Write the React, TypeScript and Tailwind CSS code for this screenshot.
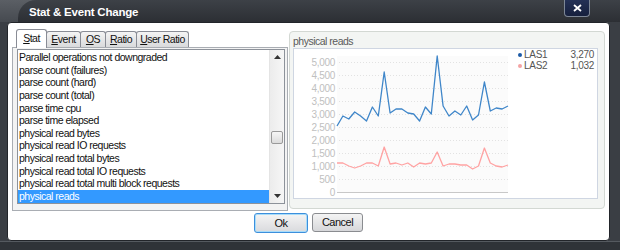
import React from 'react'

const FONT = { fontFamily: '"Liberation Sans", Arial, sans-serif' }

const items = [
  'Parallel operations not downgraded',
  'parse count (failures)',
  'parse count (hard)',
  'parse count (total)',
  'parse time cpu',
  'parse time elapsed',
  'physical read bytes',
  'physical read IO requests',
  'physical read total bytes',
  'physical read total IO requests',
  'physical read total multi block requests',
  'physical reads',
]

// page coords of the series, shifted into the chart box below
const las1 = [127, 117, 120, 113, 117, 122, 108, 117, 73, 114, 110, 110, 114, 115, 122, 108, 115, 57, 107, 117, 112, 116, 107, 121, 116, 83, 112, 109, 110, 107]
const las2 = [164, 164, 167, 169, 167, 164, 164, 167, 148, 165, 164, 166, 164, 168, 164, 165, 164, 153, 167, 165, 165, 166, 166, 170, 167, 149, 164, 167, 168, 166]

const OX = 294
const OY = 50
const X0 = 337
const X1 = 508

function pts(ys: number[]) {
  const step = (X1 - X0) / (ys.length - 1)
  return ys.map((y, i) => `${(X0 + i * step - OX).toFixed(1)},${y - OY}`).join(' ')
}

const ticks = ['5,000', '4,500', '4,000', '3,500', '3,000', '2,500', '2,000', '1,500', '1,000', '500', '0']

function Chart() {
  return (
    <svg width="303" height="149" className="block">
      <rect x={X0 - OX} y={57 - OY} width={X1 - X0} height={136} fill="#fbfbfb" />
      {ticks.map((t, i) => {
        const y = 63 + i * 13 - OY
        return (
          <g key={t}>
            {t !== '0' && (
              <line x1={X0 + 2 - OX} x2={X1 - OX} y1={y + 0.5} y2={y + 0.5} stroke="#e2e2e2" strokeDasharray="1 2" />
            )}
            <text x={335 - OX} y={y + 3.5} textAnchor="end" fontSize="10" letterSpacing="-0.3" fill="#c0c0c0" style={FONT}>
              {t}
            </text>
          </g>
        )
      })}
      <line x1={X0 - OX} x2={X1 - OX} y1={193.5 - OY} y2={193.5 - OY} stroke="#c8c8c8" />
      <polyline points={pts(las1)} fill="none" stroke="#3f86c9" strokeWidth="1.3" strokeLinejoin="round" />
      <polyline points={pts(las2)} fill="none" stroke="#ffa3a3" strokeWidth="1.3" strokeLinejoin="round" />
    </svg>
  )
}

function Tab({ label, w, active }: { label: string; w: string; active?: boolean }) {
  return (
    <div
      className={
        active
          ? `${w} h-[19px] relative z-10 -mb-px bg-white border border-b-0 border-[#898c95] rounded-t-[3px] flex items-center justify-center whitespace-nowrap`
          : `${w} h-[16px] bg-gradient-to-b from-[#f4f4f4] to-[#d9dadc] border border-b-0 border-[#898c95] rounded-t-[3px] flex items-center justify-center -ml-px whitespace-nowrap`
      }
    >
      <span className="text-[10.5px] text-[#111]">
        <span className="underline">{label[0]}</span>
        {label.slice(1)}
      </span>
    </div>
  )
}

export default function App() {
  return (
    <div className="w-[620px] h-[250px] bg-[#3a3e44] flex flex-col overflow-hidden tracking-[-0.5px]" style={FONT}>
      <div className="h-[22px] flex bg-gradient-to-b from-[#5b5f65] to-[#464a50]">
        <div className="ml-[18px] flex-1 flex rounded-tl-[18px] bg-gradient-to-b from-[#3d4147] to-[#2c2f34]">
          <div className="pl-[11px] pt-[4px] text-[11.5px] font-bold text-white tracking-[-0.2px]">Stat &amp; Event Change</div>
          <div className="ml-auto mr-[30px] w-[26px] h-[17px] rounded-b-[4px] border border-t-0 border-[#7d8796] bg-gradient-to-b from-[#243156] to-[#16203d] flex items-center justify-center">
            <svg width="9" height="8" viewBox="0 0 9 8">
              <path d="M1 1 L8 7 M8 1 L1 7" stroke="#fff" strokeWidth="1.8" />
            </svg>
          </div>
        </div>
      </div>

      <div className="ml-[7px] mr-[10px] h-[219px] bg-white border border-[#22252a] rounded-[4px] flex flex-col pt-[6px] px-[4px]">
        <div className="flex gap-[1px] h-[180px]">
          <div className="w-[276px] flex flex-col">
            <div className="flex items-end h-[19px] pl-[4px]">
              <Tab label="Stat" w="w-[31px]" active />
              <Tab label="Event" w="w-[35px]" />
              <Tab label="OS" w="w-[26px]" />
              <Tab label="Ratio" w="w-[32px]" />
              <Tab label="User Ratio" w="w-[53px]" />
            </div>
            <div className="flex-1 border border-[#a9adb3] bg-[#f3f3f3] pl-[4px] pr-[2px] pt-[1px] pb-[6px]">
              <div className="h-full border border-[#8d929a] bg-white flex">
                <div className="flex-1 pt-[1px]">
                  {items.map((t, i) => (
                    <div
                      key={t}
                      className={
                        i === items.length - 1
                          ? 'h-[12.64px] leading-[12.64px] text-[10.5px] pl-[1px] bg-[#3399ff] text-white whitespace-nowrap'
                          : 'h-[12.64px] leading-[12.64px] text-[10.5px] pl-[1px] text-[#111] whitespace-nowrap'
                      }
                    >
                      {t}
                    </div>
                  ))}
                </div>
                <div className="w-[15px] bg-gradient-to-r from-[#ececec] to-[#f6f6f6] border-l border-[#e4e4e4] flex flex-col items-center">
                  <div className="h-[14px] flex items-center justify-center">
                    <svg width="7" height="4"><path d="M0 4 L3.5 0 L7 4 Z" fill="#333" /></svg>
                  </div>
                  <div className="mt-[67px] w-[12px] h-[13px] rounded-[2px] border border-[#9a9a9a] bg-gradient-to-b from-[#f6f6f6] to-[#dcdcdc]" />
                  <div className="mt-auto h-[14px] flex items-center justify-center">
                    <svg width="7" height="4"><path d="M0 0 L7 0 L3.5 4 Z" fill="#333" /></svg>
                  </div>
                </div>
              </div>
            </div>
          </div>

          <div className="flex-1 mt-[2px] border border-[#d3d8d3] rounded-[4px] bg-[#f3f5f3] px-[3px] flex flex-col">
            <div className="h-[16px] pt-[3px] text-[10.5px] text-[#5a5a5a] leading-[12px]">physical reads</div>
            <div className="w-[305px] h-[151px] border border-[#cfd6e2] bg-white relative">
              <Chart />
              <div className="absolute right-[3px] top-[0px] w-[76px] text-[10px] leading-[11px] text-[#555] tracking-[-0.3px]">
                <div className="flex items-center">
                  <span className="w-[4px] h-[4px] rounded-full bg-[#1c5aa6] mr-[2px]" />
                  <span>LAS1</span>
                  <span className="ml-auto">3,270</span>
                </div>
                <div className="flex items-center">
                  <span className="w-[4px] h-[4px] rounded-full bg-[#f4a3a3] mr-[2px]" />
                  <span>LAS2</span>
                  <span className="ml-auto">1,032</span>
                </div>
              </div>
            </div>
          </div>
        </div>

        <div className="flex justify-center gap-[4px] mt-[4px]">
          <button className="w-[54px] h-[20px] rounded-[3px] border border-[#3c8fdc] shadow-[inset_0_0_0_1px_#a8dcfa] bg-gradient-to-b from-[#f4f4f4] to-[#d9dadd] text-[11px] text-[#111]">
            Ok
          </button>
          <button className="w-[51px] h-[19px] rounded-[3px] border border-[#8a8c90] bg-gradient-to-b from-[#f4f4f4] to-[#d6d7da] text-[11px] text-[#111]">
            Cancel
          </button>
        </div>
      </div>
      <div className="flex-1 bg-[#2f3338] border-t border-[#555a60]" />
    </div>
  )
}
